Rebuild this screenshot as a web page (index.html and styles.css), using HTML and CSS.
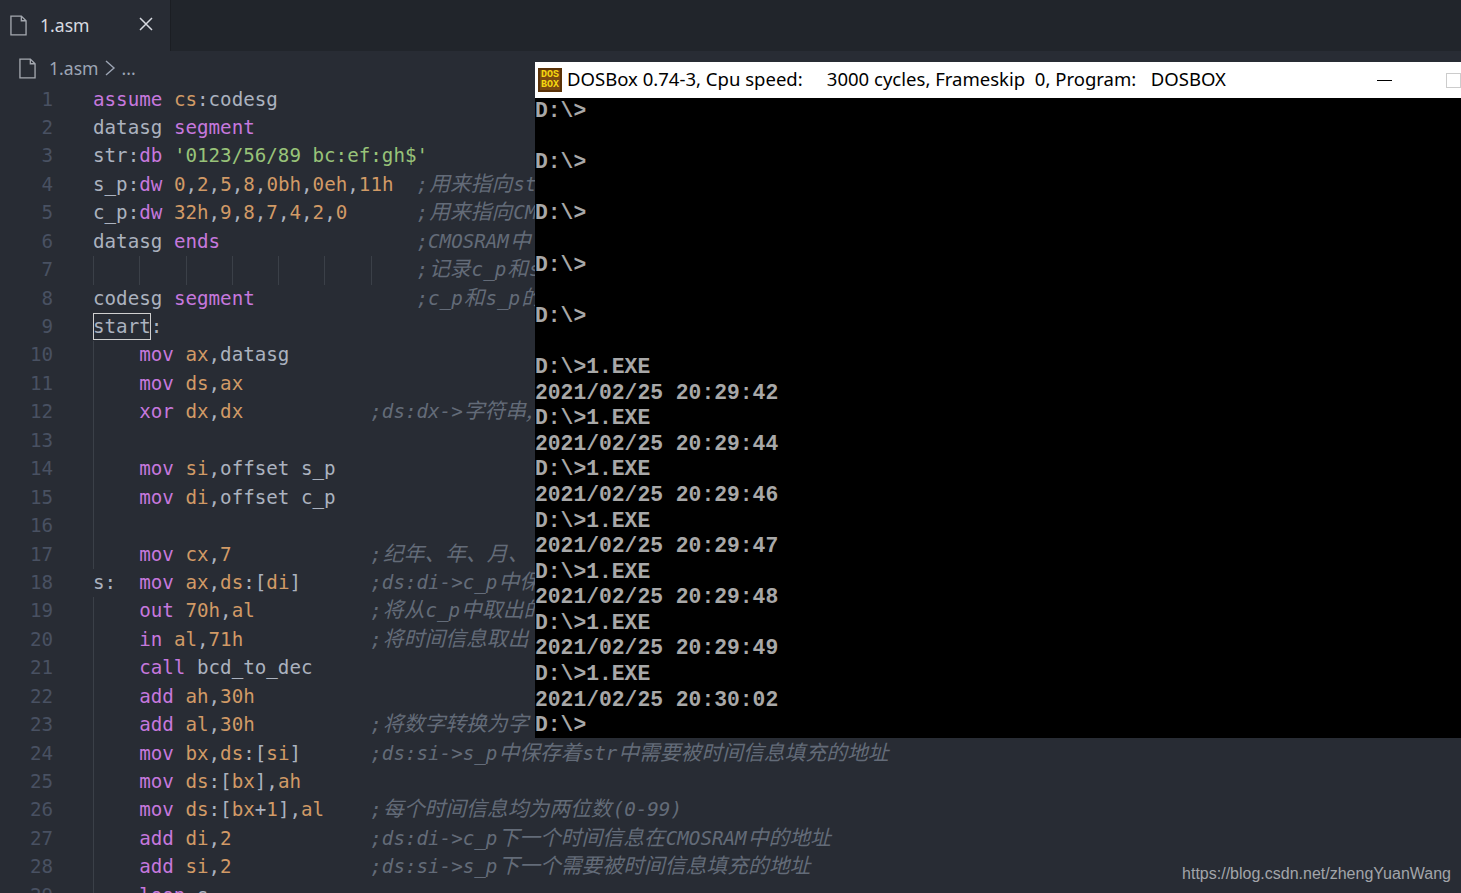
FILE: index.html
```html
<!DOCTYPE html>
<html lang="en">
<head>
  <meta charset="UTF-8">
  <title>1.asm</title>
  <link rel="stylesheet" href="styles.css">
</head>
<body>
  <div class="tabbar">
    <div class="tab">
      <svg class="file-icon" viewBox="0 0 18 22"><path d="M1 1h11l5 5v15H1z M12 1v5h5"/></svg>
      <span class="tab-name">1.asm</span>
      <svg class="close" viewBox="0 0 14 14"><path d="M1 1l12 12M13 1L1 13"/></svg>
    </div>
  </div>
  <div class="crumbs">
    <svg class="file-icon" viewBox="0 0 18 22"><path d="M1 1h11l5 5v15H1z M12 1v5h5"/></svg>
    <span class="crumb-name">1.asm</span>
    <svg class="chevron" viewBox="0 0 11 16"><path d="M1 1l8 7-8 7"/></svg>
    <span class="crumb-name">...</span>
  </div>

  <div class="editor">
    <div class="line"><span class="num">1</span><span class="code"><span class="k">assume</span> <span class="r">cs</span>:codesg</span></div>
    <div class="line"><span class="num">2</span><span class="code">datasg <span class="k">segment</span></span></div>
    <div class="line"><span class="num">3</span><span class="code">str:<span class="k">db</span> <span class="s">'0123/56/89 bc:ef:gh$'</span></span></div>
    <div class="line"><span class="num">4</span><span class="code">s_p:<span class="k">dw</span> <span class="r">0</span>,<span class="r">2</span>,<span class="r">5</span>,<span class="r">8</span>,<span class="r">0bh</span>,<span class="r">0eh</span>,<span class="r">11h</span>  <span class="c">;<span class="z">用来指向</span>str</span></span></div>
    <div class="line"><span class="num">5</span><span class="code">c_p:<span class="k">dw</span> <span class="r">32h</span>,<span class="r">9</span>,<span class="r">8</span>,<span class="r">7</span>,<span class="r">4</span>,<span class="r">2</span>,<span class="r">0</span>      <span class="c">;<span class="z">用来指向</span>CMOS</span></span></div>
    <div class="line"><span class="num">6</span><span class="code">datasg <span class="k">ends</span>                 <span class="c">;CMOSRAM<span class="z">中</span></span></span></div>
    <div class="line"><span class="num">7</span><span class="code guides">                            <span class="c">;<span class="z">记录</span>c_p<span class="z">和</span>s_p</span></span></div>
    <div class="line"><span class="num">8</span><span class="code">codesg <span class="k">segment</span>              <span class="c">;c_p<span class="z">和</span>s_p<span class="z">的</span></span></span></div>
    <div class="line"><span class="num">9</span><span class="code"><span class="cursor">start</span>:</span></div>
    <div class="line"><span class="num">10</span><span class="code guide">    <span class="k">mov</span> <span class="r">ax</span>,datasg</span></div>
    <div class="line"><span class="num">11</span><span class="code guide">    <span class="k">mov</span> <span class="r">ds</span>,<span class="r">ax</span></span></div>
    <div class="line"><span class="num">12</span><span class="code guide">    <span class="k">xor</span> <span class="r">dx</span>,<span class="r">dx</span>           <span class="c">;ds:dx-&gt;<span class="z">字符串,</span></span></span></div>
    <div class="line"><span class="num">13</span><span class="code guide"></span></div>
    <div class="line"><span class="num">14</span><span class="code guide">    <span class="k">mov</span> <span class="r">si</span>,offset s_p</span></div>
    <div class="line"><span class="num">15</span><span class="code guide">    <span class="k">mov</span> <span class="r">di</span>,offset c_p</span></div>
    <div class="line"><span class="num">16</span><span class="code guide"></span></div>
    <div class="line"><span class="num">17</span><span class="code guide">    <span class="k">mov</span> <span class="r">cx</span>,<span class="r">7</span>            <span class="c">;<span class="z">纪年、年、月、</span></span></span></div>
    <div class="line"><span class="num">18</span><span class="code">s:  <span class="k">mov</span> <span class="r">ax</span>,<span class="r">ds</span>:[<span class="r">di</span>]      <span class="c">;ds:di-&gt;c_p<span class="z">中保</span></span></span></div>
    <div class="line"><span class="num">19</span><span class="code guide">    <span class="k">out</span> <span class="r">70h</span>,<span class="r">al</span>          <span class="c">;<span class="z">将从</span>c_p<span class="z">中取出的</span></span></span></div>
    <div class="line"><span class="num">20</span><span class="code guide">    <span class="k">in</span> <span class="r">al</span>,<span class="r">71h</span>           <span class="c">;<span class="z">将时间信息取出</span></span></span></div>
    <div class="line"><span class="num">21</span><span class="code guide">    <span class="k">call</span> bcd_to_dec</span></div>
    <div class="line"><span class="num">22</span><span class="code guide">    <span class="k">add</span> <span class="r">ah</span>,<span class="r">30h</span></span></div>
    <div class="line"><span class="num">23</span><span class="code guide">    <span class="k">add</span> <span class="r">al</span>,<span class="r">30h</span>          <span class="c">;<span class="z">将数字转换为字</span></span></span></div>
    <div class="line"><span class="num">24</span><span class="code guide">    <span class="k">mov</span> <span class="r">bx</span>,<span class="r">ds</span>:[<span class="r">si</span>]      <span class="c">;ds:si-&gt;s_p<span class="z">中保存着</span>str<span class="z">中需要被时间信息填充的地址</span></span></span></div>
    <div class="line"><span class="num">25</span><span class="code guide">    <span class="k">mov</span> <span class="r">ds</span>:[<span class="r">bx</span>],<span class="r">ah</span></span></div>
    <div class="line"><span class="num">26</span><span class="code guide">    <span class="k">mov</span> <span class="r">ds</span>:[<span class="r">bx</span>+<span class="r">1</span>],<span class="r">al</span>    <span class="c">;<span class="z">每个时间信息均为两位数</span>(0-99)</span></span></div>
    <div class="line"><span class="num">27</span><span class="code guide">    <span class="k">add</span> <span class="r">di</span>,<span class="r">2</span>            <span class="c">;ds:di-&gt;c_p<span class="z">下一个时间信息在</span>CMOSRAM<span class="z">中的地址</span></span></span></div>
    <div class="line"><span class="num">28</span><span class="code guide">    <span class="k">add</span> <span class="r">si</span>,<span class="r">2</span>            <span class="c">;ds:si-&gt;s_p<span class="z">下一个需要被时间信息填充的地址</span></span></span></div>
    <div class="line"><span class="num">29</span><span class="code guide">    <span class="k">loop</span> s</span></div>
  </div>

  <div class="dosbox">
    <div class="titlebar">
      <div class="dos-icon"><span>DOS</span><span>BOX</span></div>
      <span class="title">DOSBox 0.74-3, Cpu speed:     3000 cycles, Frameskip  0, Program:   DOSBOX</span>
      <div class="controls">
        <span class="minimize"></span>
        <span class="maximize"></span>
      </div>
    </div>
    <pre class="screen">D:\&gt;

D:\&gt;

D:\&gt;

D:\&gt;

D:\&gt;

D:\&gt;1.EXE
2021/02/25 20:29:42
D:\&gt;1.EXE
2021/02/25 20:29:44
D:\&gt;1.EXE
2021/02/25 20:29:46
D:\&gt;1.EXE
2021/02/25 20:29:47
D:\&gt;1.EXE
2021/02/25 20:29:48
D:\&gt;1.EXE
2021/02/25 20:29:49
D:\&gt;1.EXE
2021/02/25 20:30:02
D:\&gt;</pre>
  </div>

  <div class="watermark">https://blog.csdn.net/zhengYuanWang</div>
</body>
</html>
```

FILE: styles.css
```css
html, body {
  height: 100%;
}
body {
  margin: 0;
  background-color: #282c34;
  overflow: hidden;
  font-family: "Noto Sans", sans-serif;
}
svg {
  display: block;
  fill: none;
}
.tabbar {
  height: 51px;
  background-color: #21252b;
  display: flex;
}
.tab {
  width: 171px;
  border-right: 1px solid #1b1e23;
  background-color: #282c34;
  display: flex;
  align-items: center;
  padding-left: 10px;
  box-sizing: border-box;
  color: #d7dae0;
}
.file-icon {
  width: 17px;
  height: 21px;
  stroke: #a5a9b0;
  stroke-width: 1.4;
}
.tab-name {
  margin-left: 13px;
  padding-bottom: 2px;
  font-size: 17.6px;
  width: 99px;
}
.close {
  width: 14px;
  height: 14px;
  margin-bottom: 3px;
  stroke: #d7dae0;
  stroke-width: 1.5;
}
.crumbs {
  height: 34.5px;
  display: flex;
  align-items: center;
  padding-left: 19px;
  color: #9da5b4;
  font-size: 17.6px;
}
.crumb-name {
  margin-left: 13px;
}
.crumbs .crumb-name:last-child {
  margin-left: 6px;
}
.chevron {
  width: 11px;
  height: 16px;
  margin-left: 6px;
  stroke: #9da5b4;
  stroke-width: 1.4;
}

.editor {
  font-family: "DejaVu Sans Mono", monospace;
  font-size: 19.2px;
  color: #abb2bf;
}
.line {
  display: flex;
  height: 28.44px;
  line-height: 28.44px;
  white-space: pre;
}
.num {
  width: 53px;
  text-align: right;
  color: #495162;
}
.code {
  margin-left: 40px;
  flex: 1;
}
.guide {
  background: linear-gradient(#3b4048, #3b4048) 0 0 / 1px 100% no-repeat;
}
.guides {
  background: repeating-linear-gradient(to right, #3b4048 0, #3b4048 1px, transparent 1px, transparent 46.27px) 0 0 / 324px 100% no-repeat;
}
.cursor {
  display: inline-block;
  line-height: 26px;
  padding-top: 1px;
  outline: 1px solid #d0d0d0;
  outline-offset: -1px;
}
.k { color: #c678dd; }
.r { color: #d19a66; }
.s { color: #98c379; }
.c {
  color: #636b78;
  font-style: italic;
}
.z {
  font-family: "Noto Sans CJK SC", sans-serif;
  font-size: 20.8px;
  line-height: 0;
  margin: 0 1px;
}

.dosbox {
  position: absolute;
  left: 535px;
  right: 0;
  top: 62px;
}
.titlebar {
  height: 36px;
  background-color: #fff;
  display: flex;
  align-items: center;
  padding-left: 3px;
}
.dos-icon {
  width: 24px;
  height: 24px;
  box-sizing: border-box;
  border: 2px solid #5a3208;
  background-color: #7a4a10;
  color: #f6d80f;
  font: bold 10px/10px "Liberation Mono", monospace;
  display: flex;
  flex-direction: column;
  align-items: center;
}
.title {
  margin-left: 5px;
  padding-bottom: 4px;
  font-size: 18.55px;
  white-space: pre;
  color: #000;
}
.controls {
  margin-left: auto;
  display: flex;
  align-items: center;
  gap: 54px;
}
.minimize {
  width: 15px;
  height: 1px;
  background-color: #000;
}
.maximize {
  width: 15px;
  height: 15px;
  box-sizing: border-box;
  border: 1px solid #ccc;
}
.screen {
  margin: 0;
  height: 640px;
  box-sizing: border-box;
  padding-top: 1px;
  background-color: #000;
  color: #a8a8a8;
  font-family: "Liberation Mono", monospace;
  font-weight: bold;
  font-size: 21.33px;
  line-height: 25.6px;
}
.watermark {
  position: absolute;
  right: 10px;
  top: 865px;
  font-family: "Liberation Sans", sans-serif;
  font-size: 16px;
  color: #a2a5aa;
}
```
